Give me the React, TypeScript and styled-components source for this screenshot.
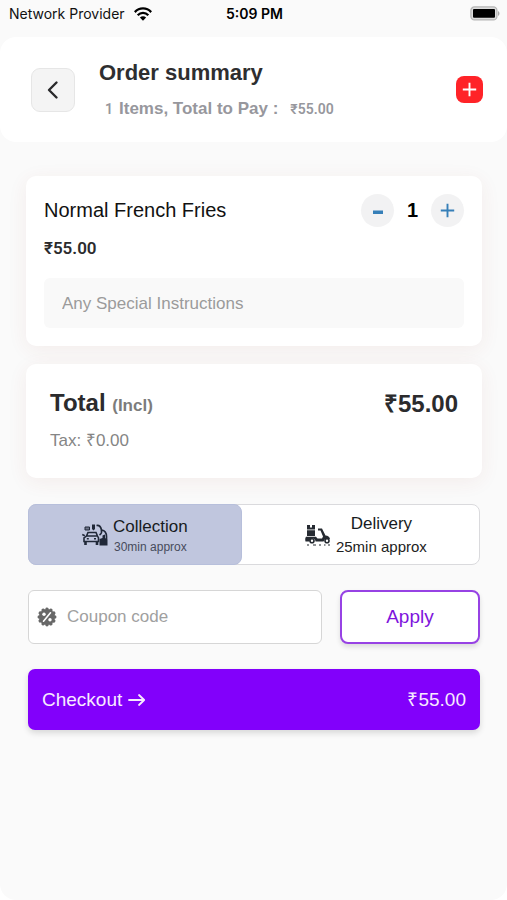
import React, { useState } from "react";
import styled, { createGlobalStyle, css } from "styled-components";

const GlobalStyle = createGlobalStyle`
  *, *::before, *::after { box-sizing: border-box; }
  body {
    margin: 0;
    background: #ffffff;
    color: #2b2b2d;
    font-family: "Liberation Sans", Arial, sans-serif;
  }
  button, input { font-family: inherit; }
  h1, h2, p { margin: 0; }
`;

const Screen = styled.div`
  min-height: 100vh;
  display: flex;
  flex-direction: column;
  background: #fafafa;
  border-radius: 0 0 16px 16px;
`;

const StatusBar = styled.div`
  display: grid;
  grid-template-columns: 1fr auto 1fr;
  align-items: center;
  height: 27px;
  margin-bottom: 10px;
  padding: 0 7px 0 9px;
  font: 400 14px "Inter", sans-serif;
  color: #111111;
`;

const Carrier = styled.div`
  display: flex;
  align-items: center;
  gap: 9px;
`;

const Clock = styled.time`
  font-weight: 600;
  color: #000000;
`;

const BatterySlot = styled.div`
  display: flex;
  justify-content: flex-end;
`;

const Header = styled.header`
  display: flex;
  align-items: center;
  min-height: 105px;
  padding: 0 24px 0 31px;
  background: #ffffff;
  border-radius: 16px;
`;

const BackButton = styled.button`
  display: grid;
  place-items: center;
  width: 44px;
  height: 44px;
  padding: 0;
  background: #f4f4f4;
  border: 1px solid #e6e6e6;
  border-radius: 9px;
`;

const Heading = styled.div`
  flex: 1;
  margin-left: 24px;
  padding-top: 2px;
`;

const PageTitle = styled.h1`
  font-size: 22px;
  line-height: 26px;
  color: #2e2e30;
`;

const Subtitle = styled.p`
  display: flex;
  align-items: baseline;
  padding: 11px 0 0 6px;
  font-size: 17px;
  line-height: 24px;
  font-weight: 700;
  color: #97979d;
`;

const ItemCount = styled.span`
  margin-right: 6px;
  font: 600 14px "Roboto", sans-serif;
`;

const HeaderPrice = styled.span`
  margin-left: 12px;
  font: 600 14px "Roboto", sans-serif;
`;

const AddButton = styled.button`
  display: grid;
  place-items: center;
  width: 27px;
  height: 27px;
  padding: 0;
  background: #ff2328;
  border: 0;
  border-radius: 8px;
`;

const Cards = styled.main`
  display: flex;
  flex-direction: column;
  gap: 18px;
  padding: 34px 25px 26px 26px;
`;

const Card = styled.section<{ $inset: number }>`
  padding: 18px ${(p) => p.$inset}px;
  background: #ffffff;
  border-radius: 10px;
  box-shadow: 0 4px 20px rgba(150, 60, 40, 0.07);
`;

const Row = styled.div`
  display: flex;
  align-items: center;
  justify-content: space-between;
`;

const ItemName = styled.h2`
  font-size: 20px;
  font-weight: 400;
  color: #111111;
`;

const Stepper = styled.div`
  display: flex;
  align-items: center;
`;

const StepButton = styled.button`
  display: grid;
  place-items: center;
  width: 33px;
  height: 33px;
  padding: 0;
  background: #f2f2f3;
  border: 0;
  border-radius: 50%;
`;

const Quantity = styled.output`
  width: 37px;
  text-align: center;
  font-size: 20px;
  font-weight: 700;
  color: #000000;
`;

const ItemPrice = styled.p`
  margin: 11px 0 20px;
  font: 600 17px/20px "Roboto", sans-serif;
`;

const Instructions = styled.input`
  display: block;
  width: 100%;
  height: 50px;
  padding: 2px 18px 0;
  font-size: 17px;
  background: #f9f9f9;
  border: 0;
  border-radius: 6px;
  &::placeholder { color: #9b9b9b; opacity: 1; }
`;

const TotalLine = styled(Row)`
  height: 28px;
  margin-top: 8px;
  font-size: 24px;
  line-height: 28px;
  font-weight: 700;
`;

const Inclusive = styled.span`
  font-size: 17px;
  color: #7c7c7c;
`;

const Tax = styled.p`
  height: 20px;
  margin: 13px 0 9px;
  font-size: 17px;
  line-height: 20px;
  color: #858585;
`;

const Form = styled.form`
  display: flex;
  flex-direction: column;
  gap: 25px;
  padding: 0 27px 24px 28px;
`;

const Segments = styled.div`
  display: flex;
  min-height: 61px;
  background: #ffffff;
  border: 1px solid #dadadd;
  border-radius: 8px;
`;

const Segment = styled.label<{ $active: boolean }>`
  display: flex;
  align-items: center;
  justify-content: center;
  gap: 5px;
  margin: -1px;
  cursor: pointer;
  ${(p) =>
    p.$active
      ? css`
          flex: 0 0 47.5%;
          background: #c0c6de;
          border: 1px solid #b7bfdb;
          border-radius: 8px;
        `
      : css`
          flex: 1;
          padding-left: 12px;
        `}
`;

const HiddenRadio = styled.input`
  position: absolute;
  opacity: 0;
  pointer-events: none;
`;

const SegmentText = styled.span<{ $active: boolean }>`
  display: flex;
  flex-direction: column;
  align-items: center;
  padding-top: ${(p) => (p.$active ? 5 : 1)}px;
  font-size: 17px;
  line-height: ${(p) => (p.$active ? 20 : 23)}px;
  color: #171b21;
  small {
    font-size: ${(p) => (p.$active ? 12 : 15)}px;
    color: ${(p) => (p.$active ? "#474b5c" : "#222222")};
  }
`;

const CouponRow = styled.div`
  display: flex;
  gap: 18px;
`;

const CouponBox = styled.label`
  flex: 1;
  display: flex;
  align-items: center;
  gap: 10px;
  height: 54px;
  padding: 0 8px;
  background: #ffffff;
  border: 1px solid #d6d6d6;
  border-radius: 6px;
`;

const CouponInput = styled.input`
  flex: 1;
  min-width: 0;
  padding: 0;
  font-size: 17px;
  background: transparent;
  border: 0;
  &::placeholder { color: #a0a0a0; opacity: 1; }
`;

const ApplyButton = styled.button`
  flex: 0 0 31%;
  font-size: 19px;
  color: #7e14dc;
  background: #ffffff;
  border: 2px solid #9742e4;
  border-radius: 8px;
  box-shadow: 0 3px 5px rgba(0, 0, 0, 0.12);
`;

const CheckoutButton = styled.button`
  display: flex;
  align-items: center;
  justify-content: space-between;
  height: 61px;
  padding: 0 14px;
  font-size: 19px;
  line-height: 22px;
  color: #f7eaff;
  background: #8200fb;
  border: 0;
  border-radius: 7px;
  box-shadow: 0 3px 6px rgba(0, 0, 0, 0.14);
`;

const CheckoutLabel = styled.span`
  display: flex;
  align-items: center;
  gap: 6px;
`;

const WifiIcon = () => (
  <svg width="18" height="14" viewBox="0 0 18 14" aria-hidden="true">
    <g fill="none" stroke="#000" strokeWidth="2.3">
      <path d="M.8 5.1C5.4.2 12.6.2 17.2 5.1" />
      <path d="M3.7 8.2c3-3.1 7.6-3.1 10.6 0" />
    </g>
    <path d="M9 13.7 5.9 10.5c1.7-1.7 4.5-1.7 6.2 0z" />
  </svg>
);

const BatteryIcon = () => (
  <svg width="30" height="15" viewBox="0 0 30 15" aria-hidden="true">
    <rect x=".9" y=".9" width="26" height="13" rx="3.5" fill="#ddd" stroke="#b5b5b5" strokeWidth="1.3" />
    <rect x="3" y="3" width="22" height="8.8" rx="1" />
    <path d="M28 5v5c2-1 2-4 0-5z" fill="#aaa" />
  </svg>
);

const ChevronIcon = () => (
  <svg width="14" height="20" viewBox="0 0 14 20" fill="none" stroke="#29292b" strokeWidth="2.4" aria-hidden="true">
    <path d="M10.5 2.5 3 10l7.5 7.5" strokeLinecap="round" strokeLinejoin="round" />
  </svg>
);

const PlusIcon = ({ color }: { color: string }) => (
  <svg width="15" height="15" viewBox="0 0 15 15" stroke={color} strokeWidth="1.9" aria-hidden="true">
    <path d="M7.5 .8v13.4M.8 7.5h13.4" />
  </svg>
);

const MinusIcon = () => (
  <svg width="16" height="16" viewBox="0 0 16 16" aria-hidden="true">
    <path d="M3 7.5h10v3.500H3z" fill="#367fb8" />
  </svg>
);

const CarPickupIcon = () => (
  <svg width="26" height="24" viewBox="0 0 26 24" fill="none" stroke="#202838" strokeWidth="1.6" aria-hidden="true">
    <path d="M2 18.5v-3.5l2.500-2 1.500-3.500h8l1.500 3.500 1 2v3.500zM4.500 13h11" />
    <path d="M3.500 18.500V22M15 18.500V22" strokeWidth="2.6" />
    <path d="M.3 11.500l2.500 1.200M4.800 15.800h2M12 15.800h2" />
    <path d="M3 4h4.500v3H3z" fill="#202838" fillOpacity=".5" strokeWidth="1" />
    <path d="M10 1.500h3V6l-1.500 1.500L10 6z" fill="#202838" stroke="none" />
    <path d="M14.500 2.500c3-.5 4.500 2 5 4.500 3 .5 5 3 5 6.500v3" strokeWidth="1.7" />
    <path d="M19.500 7c.5 2-.5 4-2 5" />
    <path d="m17.500 16 3-1v-2.500l2.500-1v3.500l2.500 1.500v6h-8z" fill="#202838" stroke="none" />
  </svg>
);

const ScooterIcon = () => (
  <svg width="26" height="22" viewBox="0 0 26 22" fill="#252a31" aria-hidden="true">
    <path d="M2 1h3v2.500h2V1h3v4.600H2zM2 6.200h8V12H2z" />
    <path d="M1 12.800h10l1.500 1.700H17l1-2-2.500-6H13V4.500h4l3.500 7c2.500 0 4 1.500 4.500 3.500h-5l-1.500 2.500h-8c0-4-5.500-4-6 0H.5C0 15.500.2 14 1 12.800z" />
    <g fill="none" stroke="#252a31" strokeWidth="1.6">
      <circle cx="7" cy="16.8" r="2" />
      <circle cx="22" cy="16.8" r="2" />
    </g>
    <path d="M2 20.500h2v1H2zm6 0h3v1H8zm6 0h2v1h-2zm5 0h1.500v1H19zm4 0h2v1h-2z" />
  </svg>
);

const DiscountIcon = () => (
  <svg width="20" height="20" viewBox="0 0 20 20" aria-hidden="true">
    <circle cx="10" cy="10" r="8" fill="#686868" />
    <circle
      cx="10"
      cy="10"
      r="7.8"
      pathLength="120"
      fill="none"
      stroke="#686868"
      strokeWidth="3.4"
      strokeLinecap="round"
      strokeDasharray="0.1 9.9"
    />
    <path d="m13.5 5.8-7 8.4" stroke="#fff" strokeWidth="1.6" strokeLinecap="round" />
    <circle cx="7" cy="7.3" r="1.7" fill="#fff" />
    <circle cx="13" cy="12.7" r="1.7" fill="#fff" />
  </svg>
);

const ArrowIcon = () => (
  <svg width="18" height="14" viewBox="0 0 18 14" fill="none" stroke="#f7eaff" strokeWidth="1.8" aria-hidden="true">
    <path d="M1 7h15M11 2l5.200 5-5.200 5" strokeLinecap="round" strokeLinejoin="round" />
  </svg>
);

const METHODS = [
  { id: "collection", name: "Collection", wait: "30min approx", Icon: CarPickupIcon },
  { id: "delivery", name: "Delivery", wait: "25min approx", Icon: ScooterIcon },
];

export default function App() {
  const [method, setMethod] = useState("collection");
  const [quantity, setQuantity] = useState(1);
  const total = `₹${(quantity * 55).toFixed(2)}`;

  return (
    <>
      <GlobalStyle />
      <Screen>
        <StatusBar>
          <Carrier>Network Provider <WifiIcon /></Carrier>
          <Clock>5:09 PM</Clock>
          <BatterySlot><BatteryIcon /></BatterySlot>
        </StatusBar>
        <Header>
          <BackButton type="button" aria-label="Back"><ChevronIcon /></BackButton>
          <Heading>
            <PageTitle>Order summary</PageTitle>
            <Subtitle>
              <ItemCount>{quantity}</ItemCount>
              Items, Total to Pay :
              <HeaderPrice>{total}</HeaderPrice>
            </Subtitle>
          </Heading>
          <AddButton type="button" aria-label="Add items"><PlusIcon color="#fff" /></AddButton>
        </Header>
        <Cards>
          <Card $inset={18}>
            <Row>
              <ItemName>Normal French Fries</ItemName>
              <Stepper>
                <StepButton type="button" aria-label="Decrease" onClick={() => setQuantity(Math.max(1, quantity - 1))}>
                  <MinusIcon />
                </StepButton>
                <Quantity>{quantity}</Quantity>
                <StepButton type="button" aria-label="Increase" onClick={() => setQuantity(quantity + 1)}>
                  <PlusIcon color="#367fb8" />
                </StepButton>
              </Stepper>
            </Row>
            <ItemPrice>₹55.00</ItemPrice>
            <Instructions aria-label="Any Special Instructions" placeholder="Any Special Instructions" />
          </Card>
          <Card $inset={24}>
            <TotalLine>
              <span>Total <Inclusive>(Incl)</Inclusive></span>
              <span>{total}</span>
            </TotalLine>
            <Tax>Tax: ₹0.00</Tax>
          </Card>
        </Cards>
        <Form onSubmit={(e) => e.preventDefault()}>
          <Segments role="radiogroup" aria-label="Order method">
            {METHODS.map(({ id, name, wait, Icon }) => (
              <Segment key={id} $active={method === id}>
                <HiddenRadio type="radio" name="method" checked={method === id} onChange={() => setMethod(id)} />
                <Icon />
                <SegmentText $active={method === id}>
                  {name}
                  <small>{wait}</small>
                </SegmentText>
              </Segment>
            ))}
          </Segments>
          <CouponRow>
            <CouponBox>
              <DiscountIcon />
              <CouponInput aria-label="Coupon code" placeholder="Coupon code" />
            </CouponBox>
            <ApplyButton type="button">Apply</ApplyButton>
          </CouponRow>
          <CheckoutButton type="submit">
            <CheckoutLabel>Checkout <ArrowIcon /></CheckoutLabel>
            <span>{total}</span>
          </CheckoutButton>
        </Form>
      </Screen>
    </>
  );
}
